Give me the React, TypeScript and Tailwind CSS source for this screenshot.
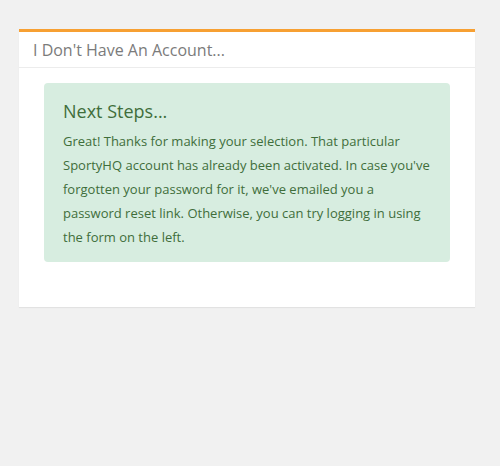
export default function App() {
    return (
        <div className="min-h-[466px] bg-[#f1f1f1] pt-[29px] px-[19px] pb-10" style={{ fontFamily: '"Open Sans", sans-serif' }}>
            <div className="w-[456px] bg-white border-t-[3px] border-[#f7a033] shadow-[0_1px_1px_rgba(0,0,0,0.06)]">
                <div className="h-[36px] flex items-center px-[14px] border-b border-[#ececec]">
                    <h2 className="text-[16px] text-[#7b7b7b]">I Don't Have An Account...</h2>
                </div>
                <div className="pt-[15px] px-[25px] pb-[45px]">
                    <div className="bg-[#d7ede0] rounded-[4px] px-[19px] pt-[15px] pb-[13px] text-[#3f6e3b]">
                        <h3 className="text-[18px] leading-[26px] mb-[5px]">Next Steps...</h3>
                        <p className="text-[13px] leading-[24px]">
                            Great! Thanks for making your selection. That particular SportyHQ account has already been activated. In case you've forgotten your password for it, we've emailed you a password reset link. Otherwise, you can try logging in using the form on the left.
                        </p>
                    </div>
                </div>
            </div>
        </div>
    );
}
